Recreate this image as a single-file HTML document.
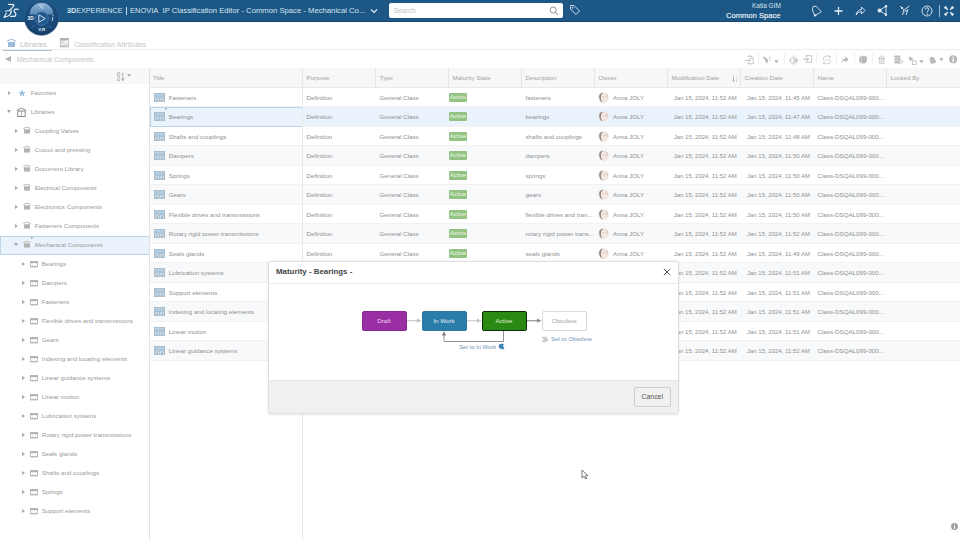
<!DOCTYPE html><html><head><meta charset="utf-8"><style>
*{margin:0;padding:0;box-sizing:border-box}
html,body{width:960px;height:540px;overflow:hidden;background:#fff;font-family:"Liberation Sans",sans-serif;position:relative}
.a{position:absolute}
.hdr{left:0;top:0;width:960px;height:21.5px;background:#1c5785;border-bottom:1px solid #17456c}
.ht{position:absolute;color:#d6e5f2;font-size:7.45px;white-space:nowrap;line-height:10px}
.t{position:absolute;white-space:nowrap;line-height:8px;font-size:6.2px;color:#909090}
.arr{position:absolute;width:0;height:0;border-left:3.9px solid #a9a9a9;border-top:2.9px solid transparent;border-bottom:2.9px solid transparent}
.arrd{position:absolute;width:0;height:0;border-top:3.8px solid #a0a0a0;border-left:2.8px solid transparent;border-right:2.8px solid transparent}
.vl{position:absolute;width:1px;background:#e6e6e6}
.hl{position:absolute;height:1px;background:#eeeeee}
.badge{position:absolute;width:18px;height:9.2px;background:#92c383;border-radius:1.2px;color:#eef9e8;font-size:6px;line-height:9.2px;text-align:center}
.ico{position:absolute;width:11px;height:9px;background:#a5c0d4;border:0.5px solid #8eabc1}
.av{position:absolute;width:10.5px;height:10.5px;border-radius:50%;background:radial-gradient(circle at 58% 50%,#f6ebe6 0,#efdfd8 45%,#c9b5ab 75%,#8f8580 100%)}
.lib{position:absolute;width:8px;height:7px}
</style></head><body>
<div class="a hdr"></div>
<div class="ht" style="left:67px;top:6.4px;font-size:7.2px"><b>3D</b>EXPERIENCE</div>
<div class="a" style="left:126.3px;top:7px;width:0.8px;height:8px;background:#c9dbeb"></div>
<div class="ht" style="left:130px;top:6.4px;font-size:7.5px">ENOVIA</div>
<div class="ht" style="left:162.5px;top:6.4px;font-size:7.7px">IP Classification Editor - Common Space - Mechanical Co...</div>
<div class="a" style="left:388.8px;top:3.3px;width:174.6px;height:14.7px;background:#fff;border-radius:2px"></div>
<div class="t" style="left:393.7px;top:7px;font-size:6.9px;color:#c2c2c2">Search</div>
<div class="ht" style="left:752px;top:1px;font-size:6.5px">Katia GIM</div>
<div class="ht" style="left:726px;top:10.5px;font-size:7.6px;color:#f4f8fb;-webkit-text-stroke:0.12px #f4f8fb">Common Space</div>
<div class="hl" style="left:0;top:49px;width:960px;background:#ececec"></div>
<div class="a" style="left:2.5px;top:49.5px;width:49px;height:1.5px;background:#a9c0d3"></div>
<div class="t" style="left:20px;top:40.5px;font-size:7px;color:#bdbdbd">Libraries</div>
<div class="t" style="left:74px;top:40.5px;font-size:7px;color:#c6c6c6">Classification Attributes</div>
<div class="t" style="left:16.7px;top:55.5px;font-size:7px;color:#c6c6c6">Mechanical Components</div>
<div class="a" style="left:4.5px;top:55.5px;width:0;height:0;border-right:6px solid #b5b5b5;border-top:3.9px solid transparent;border-bottom:3.9px solid transparent"></div>
<div class="a" style="left:0;top:68px;width:149px;height:16px;background:#f8f8f8"></div>
<div class="arr" style="left:8px;top:90.6px"></div>
<div class="t" style="left:30.8px;top:89.4px;color:#999">Favorites</div>
<svg class="a" style="left:17.5px;top:89px" width="8" height="8" viewBox="0 0 8 8"><path d="M4 0.3 L5 3 L7.8 3 L5.6 4.8 L6.4 7.6 L4 6 L1.6 7.6 L2.4 4.8 L0.2 3 L3 3 Z" fill="#9cc0de"/></svg>
<div class="arrd" style="left:7px;top:110.2px"></div>
<div class="t" style="left:30.8px;top:108.4px;color:#999">Libraries</div>
<svg class="a" style="left:16px;top:106.5px" width="11" height="11" viewBox="0 0 11 11"><path d="M0.8 3.5 L5.5 1 L10.2 3.5" fill="none" stroke="#8a8a8a" stroke-width="1"/><rect x="1.8" y="4" width="7.4" height="5.5" fill="none" stroke="#8a8a8a" stroke-width="1"/><path d="M5.5 4 V9.5" stroke="#8a8a8a" stroke-width="0.7"/></svg>
<div class="arr" style="left:15px;top:128.6px"></div>
<div class="t" style="left:34.7px;top:127.4px;color:#999">Coupling Valves</div>
<svg class="a" style="left:23px;top:126px" width="8" height="9" viewBox="0 0 8 9"><path d="M0.3 2.5 Q4 -0.2 7.7 2.5" fill="none" stroke="#b3b3b3" stroke-width="0.9"/><rect x="1" y="3.3" width="6" height="4.2" fill="#b3b3b3"/><rect x="3.5" y="7.5" width="1" height="0.8" fill="#ccc"/></svg>
<div class="arr" style="left:15px;top:147.6px"></div>
<div class="t" style="left:34.7px;top:146.4px;color:#999">Cutout and pressing</div>
<svg class="a" style="left:23px;top:145px" width="8" height="9" viewBox="0 0 8 9"><path d="M0.3 2.5 Q4 -0.2 7.7 2.5" fill="none" stroke="#b3b3b3" stroke-width="0.9"/><rect x="1" y="3.3" width="6" height="4.2" fill="#b3b3b3"/><rect x="3.5" y="7.5" width="1" height="0.8" fill="#ccc"/></svg>
<div class="arr" style="left:15px;top:166.6px"></div>
<div class="t" style="left:34.7px;top:165.4px;color:#999">Document Library</div>
<svg class="a" style="left:23px;top:164px" width="8" height="9" viewBox="0 0 8 9"><path d="M0.3 2.5 Q4 -0.2 7.7 2.5" fill="none" stroke="#b3b3b3" stroke-width="0.9"/><rect x="1" y="3.3" width="6" height="4.2" fill="#b3b3b3"/><rect x="3.5" y="7.5" width="1" height="0.8" fill="#ccc"/></svg>
<div class="arr" style="left:15px;top:185.6px"></div>
<div class="t" style="left:34.7px;top:184.4px;color:#999">Electrical Components</div>
<svg class="a" style="left:23px;top:183px" width="8" height="9" viewBox="0 0 8 9"><path d="M0.3 2.5 Q4 -0.2 7.7 2.5" fill="none" stroke="#b3b3b3" stroke-width="0.9"/><rect x="1" y="3.3" width="6" height="4.2" fill="#b3b3b3"/><rect x="3.5" y="7.5" width="1" height="0.8" fill="#ccc"/></svg>
<div class="arr" style="left:15px;top:204.6px"></div>
<div class="t" style="left:34.7px;top:203.4px;color:#999">Electronics Components</div>
<svg class="a" style="left:23px;top:202px" width="8" height="9" viewBox="0 0 8 9"><path d="M0.3 2.5 Q4 -0.2 7.7 2.5" fill="none" stroke="#b3b3b3" stroke-width="0.9"/><rect x="1" y="3.3" width="6" height="4.2" fill="#b3b3b3"/><rect x="3.5" y="7.5" width="1" height="0.8" fill="#ccc"/></svg>
<div class="arr" style="left:15px;top:223.6px"></div>
<div class="t" style="left:34.7px;top:222.4px;color:#999">Fasteners Components</div>
<svg class="a" style="left:23px;top:221px" width="8" height="9" viewBox="0 0 8 9"><path d="M0.3 2.5 Q4 -0.2 7.7 2.5" fill="none" stroke="#b3b3b3" stroke-width="0.9"/><rect x="1" y="3.3" width="6" height="4.2" fill="#b3b3b3"/><rect x="3.5" y="7.5" width="1" height="0.8" fill="#ccc"/></svg>
<div class="a" style="left:0;top:236px;width:150px;height:19px;background:#eaf3fb;border:1px solid #bcd4e8"></div>
<svg class="a" style="left:30.5px;top:236.5px" width="3" height="3" viewBox="0 0 3 3"><path d="M0 0 H2.4 L0 2.4 Z" fill="#93b4d2"/></svg>
<div class="arrd" style="left:14px;top:243.2px"></div>
<div class="t" style="left:34.7px;top:241.4px;color:#999">Mechanical Components</div>
<svg class="a" style="left:23px;top:240px" width="8" height="9" viewBox="0 0 8 9"><path d="M0.3 2.5 Q4 -0.2 7.7 2.5" fill="none" stroke="#b3b3b3" stroke-width="0.9"/><rect x="1" y="3.3" width="6" height="4.2" fill="#b3b3b3"/><rect x="3.5" y="7.5" width="1" height="0.8" fill="#ccc"/></svg>
<div class="arr" style="left:22px;top:261.6px"></div>
<div class="t" style="left:41.7px;top:260.4px;color:#999">Bearings</div>
<svg class="a" style="left:30px;top:260.5px" width="8" height="7" viewBox="0 0 8 7"><rect x="0.4" y="0.4" width="7.2" height="5.4" fill="none" stroke="#b0b0b0" stroke-width="0.8"/><rect x="0.4" y="0.4" width="7.2" height="1.8" fill="#b0b0b0"/><path d="M1 5.8 H7 M2.5 4.5 V6 M5.5 4.5 V6" stroke="#b0b0b0" stroke-width="0.8"/></svg>
<div class="arr" style="left:22px;top:280.6px"></div>
<div class="t" style="left:41.7px;top:279.4px;color:#999">Dampers</div>
<svg class="a" style="left:30px;top:279.5px" width="8" height="7" viewBox="0 0 8 7"><rect x="0.4" y="0.4" width="7.2" height="5.4" fill="none" stroke="#b0b0b0" stroke-width="0.8"/><rect x="0.4" y="0.4" width="7.2" height="1.8" fill="#b0b0b0"/><path d="M1 5.8 H7 M2.5 4.5 V6 M5.5 4.5 V6" stroke="#b0b0b0" stroke-width="0.8"/></svg>
<div class="arr" style="left:22px;top:299.6px"></div>
<div class="t" style="left:41.7px;top:298.4px;color:#999">Fasteners</div>
<svg class="a" style="left:30px;top:298.5px" width="8" height="7" viewBox="0 0 8 7"><rect x="0.4" y="0.4" width="7.2" height="5.4" fill="none" stroke="#b0b0b0" stroke-width="0.8"/><rect x="0.4" y="0.4" width="7.2" height="1.8" fill="#b0b0b0"/><path d="M1 5.8 H7 M2.5 4.5 V6 M5.5 4.5 V6" stroke="#b0b0b0" stroke-width="0.8"/></svg>
<div class="arr" style="left:22px;top:318.6px"></div>
<div class="t" style="left:41.7px;top:317.4px;color:#999">Flexible drives and transmissions</div>
<svg class="a" style="left:30px;top:317.5px" width="8" height="7" viewBox="0 0 8 7"><rect x="0.4" y="0.4" width="7.2" height="5.4" fill="none" stroke="#b0b0b0" stroke-width="0.8"/><rect x="0.4" y="0.4" width="7.2" height="1.8" fill="#b0b0b0"/><path d="M1 5.8 H7 M2.5 4.5 V6 M5.5 4.5 V6" stroke="#b0b0b0" stroke-width="0.8"/></svg>
<div class="arr" style="left:22px;top:337.6px"></div>
<div class="t" style="left:41.7px;top:336.4px;color:#999">Gears</div>
<svg class="a" style="left:30px;top:336.5px" width="8" height="7" viewBox="0 0 8 7"><rect x="0.4" y="0.4" width="7.2" height="5.4" fill="none" stroke="#b0b0b0" stroke-width="0.8"/><rect x="0.4" y="0.4" width="7.2" height="1.8" fill="#b0b0b0"/><path d="M1 5.8 H7 M2.5 4.5 V6 M5.5 4.5 V6" stroke="#b0b0b0" stroke-width="0.8"/></svg>
<div class="arr" style="left:22px;top:356.6px"></div>
<div class="t" style="left:41.7px;top:355.4px;color:#999">Indexing and locating elements</div>
<svg class="a" style="left:30px;top:355.5px" width="8" height="7" viewBox="0 0 8 7"><rect x="0.4" y="0.4" width="7.2" height="5.4" fill="none" stroke="#b0b0b0" stroke-width="0.8"/><rect x="0.4" y="0.4" width="7.2" height="1.8" fill="#b0b0b0"/><path d="M1 5.8 H7 M2.5 4.5 V6 M5.5 4.5 V6" stroke="#b0b0b0" stroke-width="0.8"/></svg>
<div class="arr" style="left:22px;top:375.6px"></div>
<div class="t" style="left:41.7px;top:374.4px;color:#999">Linear guidance systems</div>
<svg class="a" style="left:30px;top:374.5px" width="8" height="7" viewBox="0 0 8 7"><rect x="0.4" y="0.4" width="7.2" height="5.4" fill="none" stroke="#b0b0b0" stroke-width="0.8"/><rect x="0.4" y="0.4" width="7.2" height="1.8" fill="#b0b0b0"/><path d="M1 5.8 H7 M2.5 4.5 V6 M5.5 4.5 V6" stroke="#b0b0b0" stroke-width="0.8"/></svg>
<div class="arr" style="left:22px;top:394.6px"></div>
<div class="t" style="left:41.7px;top:393.4px;color:#999">Linear motion</div>
<svg class="a" style="left:30px;top:393.5px" width="8" height="7" viewBox="0 0 8 7"><rect x="0.4" y="0.4" width="7.2" height="5.4" fill="none" stroke="#b0b0b0" stroke-width="0.8"/><rect x="0.4" y="0.4" width="7.2" height="1.8" fill="#b0b0b0"/><path d="M1 5.8 H7 M2.5 4.5 V6 M5.5 4.5 V6" stroke="#b0b0b0" stroke-width="0.8"/></svg>
<div class="arr" style="left:22px;top:413.6px"></div>
<div class="t" style="left:41.7px;top:412.4px;color:#999">Lubrication systems</div>
<svg class="a" style="left:30px;top:412.5px" width="8" height="7" viewBox="0 0 8 7"><rect x="0.4" y="0.4" width="7.2" height="5.4" fill="none" stroke="#b0b0b0" stroke-width="0.8"/><rect x="0.4" y="0.4" width="7.2" height="1.8" fill="#b0b0b0"/><path d="M1 5.8 H7 M2.5 4.5 V6 M5.5 4.5 V6" stroke="#b0b0b0" stroke-width="0.8"/></svg>
<div class="arr" style="left:22px;top:432.6px"></div>
<div class="t" style="left:41.7px;top:431.4px;color:#999">Rotary rigid power transmissions</div>
<svg class="a" style="left:30px;top:431.5px" width="8" height="7" viewBox="0 0 8 7"><rect x="0.4" y="0.4" width="7.2" height="5.4" fill="none" stroke="#b0b0b0" stroke-width="0.8"/><rect x="0.4" y="0.4" width="7.2" height="1.8" fill="#b0b0b0"/><path d="M1 5.8 H7 M2.5 4.5 V6 M5.5 4.5 V6" stroke="#b0b0b0" stroke-width="0.8"/></svg>
<div class="arr" style="left:22px;top:451.6px"></div>
<div class="t" style="left:41.7px;top:450.4px;color:#999">Seals glands</div>
<svg class="a" style="left:30px;top:450.5px" width="8" height="7" viewBox="0 0 8 7"><rect x="0.4" y="0.4" width="7.2" height="5.4" fill="none" stroke="#b0b0b0" stroke-width="0.8"/><rect x="0.4" y="0.4" width="7.2" height="1.8" fill="#b0b0b0"/><path d="M1 5.8 H7 M2.5 4.5 V6 M5.5 4.5 V6" stroke="#b0b0b0" stroke-width="0.8"/></svg>
<div class="arr" style="left:22px;top:470.6px"></div>
<div class="t" style="left:41.7px;top:469.4px;color:#999">Shafts and couplings</div>
<svg class="a" style="left:30px;top:469.5px" width="8" height="7" viewBox="0 0 8 7"><rect x="0.4" y="0.4" width="7.2" height="5.4" fill="none" stroke="#b0b0b0" stroke-width="0.8"/><rect x="0.4" y="0.4" width="7.2" height="1.8" fill="#b0b0b0"/><path d="M1 5.8 H7 M2.5 4.5 V6 M5.5 4.5 V6" stroke="#b0b0b0" stroke-width="0.8"/></svg>
<div class="arr" style="left:22px;top:489.6px"></div>
<div class="t" style="left:41.7px;top:488.4px;color:#999">Springs</div>
<svg class="a" style="left:30px;top:488.5px" width="8" height="7" viewBox="0 0 8 7"><rect x="0.4" y="0.4" width="7.2" height="5.4" fill="none" stroke="#b0b0b0" stroke-width="0.8"/><rect x="0.4" y="0.4" width="7.2" height="1.8" fill="#b0b0b0"/><path d="M1 5.8 H7 M2.5 4.5 V6 M5.5 4.5 V6" stroke="#b0b0b0" stroke-width="0.8"/></svg>
<div class="arr" style="left:22px;top:508.6px"></div>
<div class="t" style="left:41.7px;top:507.4px;color:#999">Support elements</div>
<svg class="a" style="left:30px;top:507.5px" width="8" height="7" viewBox="0 0 8 7"><rect x="0.4" y="0.4" width="7.2" height="5.4" fill="none" stroke="#b0b0b0" stroke-width="0.8"/><rect x="0.4" y="0.4" width="7.2" height="1.8" fill="#b0b0b0"/><path d="M1 5.8 H7 M2.5 4.5 V6 M5.5 4.5 V6" stroke="#b0b0b0" stroke-width="0.8"/></svg>
<div class="vl" style="left:149px;top:68px;height:472px;background:#e3e3e3"></div>
<div class="a" style="left:150px;top:68px;width:810px;height:19.5px;background:#f7f7f7;border-bottom:1px solid #e9e9e9"></div>
<div class="t" style="left:153px;top:74px;color:#a3a3a3">Title</div>
<div class="vl" style="left:302.0px;top:68px;height:19.5px;background:#e6e6e6"></div>
<div class="t" style="left:306.5px;top:74px;color:#a3a3a3">Purpose</div>
<div class="vl" style="left:375.0px;top:68px;height:19.5px;background:#e6e6e6"></div>
<div class="t" style="left:379.5px;top:74px;color:#a3a3a3">Type</div>
<div class="vl" style="left:448.0px;top:68px;height:19.5px;background:#e6e6e6"></div>
<div class="t" style="left:452.5px;top:74px;color:#a3a3a3">Maturity State</div>
<div class="vl" style="left:521.0px;top:68px;height:19.5px;background:#e6e6e6"></div>
<div class="t" style="left:525.5px;top:74px;color:#a3a3a3">Description</div>
<div class="vl" style="left:594.0px;top:68px;height:19.5px;background:#e6e6e6"></div>
<div class="t" style="left:598.5px;top:74px;color:#a3a3a3">Owner</div>
<div class="vl" style="left:667.0px;top:68px;height:19.5px;background:#e6e6e6"></div>
<div class="t" style="left:671.5px;top:74px;color:#a3a3a3">Modification Date</div>
<div class="vl" style="left:740.0px;top:68px;height:19.5px;background:#e6e6e6"></div>
<div class="t" style="left:744.5px;top:74px;color:#a3a3a3">Creation Date</div>
<div class="vl" style="left:813.0px;top:68px;height:19.5px;background:#e6e6e6"></div>
<div class="t" style="left:817.5px;top:74px;color:#a3a3a3">Name</div>
<div class="vl" style="left:886.0px;top:68px;height:19.5px;background:#e6e6e6"></div>
<div class="t" style="left:890.5px;top:74px;color:#a3a3a3">Locked By</div>
<div class="a" style="left:150px;top:87.5px;width:810px;height:19.5px;background:#ffffff;border-bottom:1px solid #f2f2f2"></div>
<svg class="a" style="left:154px;top:92.75px" width="11" height="9" viewBox="0 0 11 9"><defs><linearGradient id="ig0" x1="0" y1="0" x2="0" y2="1"><stop offset="0" stop-color="#b9d3e6"/><stop offset="1" stop-color="#9fb5c6"/></linearGradient></defs><rect x="0.3" y="0.3" width="10.4" height="8.4" fill="url(#ig0)" stroke="#95abbc" stroke-width="0.6"/><path d="M1.6 8.6 V5.8 H4.6 V8.6 M6.4 8.6 V5.8 H9.4 V8.6" fill="none" stroke="#dfe9f0" stroke-width="0.8"/></svg>
<div class="t" style="left:168.8px;top:93.55px">Fasteners</div>
<div class="t" style="left:306.5px;top:93.55px">Definition</div>
<div class="t" style="left:379.5px;top:93.55px">General Class</div>
<div class="badge" style="left:449px;top:92.65px">Active</div>
<div class="t" style="left:525.5px;top:93.55px">fasteners</div>
<svg class="a" style="left:598px;top:91.85px" width="11" height="11" viewBox="0 0 11 11"><circle cx="5.5" cy="5.5" r="5.2" fill="#efe6e2"/><path d="M1.2 4 Q1.5 1 5 0.8 Q2.8 2.5 3 6 Q3 9 5 10.5 Q1 9.5 1.2 4 Z" fill="#8e8682"/><ellipse cx="6" cy="5.6" rx="3.1" ry="3.9" fill="#f5e6de"/><path d="M4.6 4.6 H5.4 M6.8 4.6 H7.6" stroke="#b09a90" stroke-width="0.6"/><path d="M8.5 2 Q9.8 3.5 9.3 6" stroke="#c8b8b0" stroke-width="0.7" fill="none"/></svg>
<div class="t" style="left:613px;top:93.55px">Anna JOLY</div>
<div class="t" style="left:673.75px;top:93.75px;font-size:6px">Jan 15, 2024, 11:52 AM</div>
<div class="t" style="left:747px;top:93.75px;font-size:6px">Jan 15, 2024, 11:45 AM</div>
<div class="t" style="left:817.5px;top:93.55px">Class-DSQAL099-000...</div>
<div class="a" style="left:150px;top:107.0px;width:810px;height:19.5px;background:#eaf3fb;border-bottom:1px solid #f2f2f2"></div>
<svg class="a" style="left:164.5px;top:107.5px" width="3" height="3" viewBox="0 0 3 3"><path d="M0 0 H2.4 L0 2.4 Z" fill="#93b4d2"/></svg>
<div class="a" style="left:149.5px;top:106.5px;width:153px;height:20px;border:1px solid #bcd4e8"></div>
<svg class="a" style="left:154px;top:112.25px" width="11" height="9" viewBox="0 0 11 9"><defs><linearGradient id="ig1" x1="0" y1="0" x2="0" y2="1"><stop offset="0" stop-color="#b9d3e6"/><stop offset="1" stop-color="#9fb5c6"/></linearGradient></defs><rect x="0.3" y="0.3" width="10.4" height="8.4" fill="url(#ig1)" stroke="#95abbc" stroke-width="0.6"/><path d="M1.6 8.6 V5.8 H4.6 V8.6 M6.4 8.6 V5.8 H9.4 V8.6" fill="none" stroke="#dfe9f0" stroke-width="0.8"/></svg>
<div class="t" style="left:168.8px;top:113.05px">Bearings</div>
<div class="t" style="left:306.5px;top:113.05px">Definition</div>
<div class="t" style="left:379.5px;top:113.05px">General Class</div>
<div class="badge" style="left:449px;top:112.15px">Active</div>
<div class="t" style="left:525.5px;top:113.05px">bearings</div>
<svg class="a" style="left:598px;top:111.35px" width="11" height="11" viewBox="0 0 11 11"><circle cx="5.5" cy="5.5" r="5.2" fill="#efe6e2"/><path d="M1.2 4 Q1.5 1 5 0.8 Q2.8 2.5 3 6 Q3 9 5 10.5 Q1 9.5 1.2 4 Z" fill="#8e8682"/><ellipse cx="6" cy="5.6" rx="3.1" ry="3.9" fill="#f5e6de"/><path d="M4.6 4.6 H5.4 M6.8 4.6 H7.6" stroke="#b09a90" stroke-width="0.6"/><path d="M8.5 2 Q9.8 3.5 9.3 6" stroke="#c8b8b0" stroke-width="0.7" fill="none"/></svg>
<div class="t" style="left:613px;top:113.05px">Anna JOLY</div>
<div class="t" style="left:673.75px;top:113.25px;font-size:6px">Jan 15, 2024, 11:52 AM</div>
<div class="t" style="left:747px;top:113.25px;font-size:6px">Jan 15, 2024, 11:47 AM</div>
<div class="t" style="left:817.5px;top:113.05px">Class-DSQAL099-000...</div>
<div class="a" style="left:150px;top:126.5px;width:810px;height:19.5px;background:#ffffff;border-bottom:1px solid #f2f2f2"></div>
<svg class="a" style="left:154px;top:131.75px" width="11" height="9" viewBox="0 0 11 9"><defs><linearGradient id="ig2" x1="0" y1="0" x2="0" y2="1"><stop offset="0" stop-color="#b9d3e6"/><stop offset="1" stop-color="#9fb5c6"/></linearGradient></defs><rect x="0.3" y="0.3" width="10.4" height="8.4" fill="url(#ig2)" stroke="#95abbc" stroke-width="0.6"/><path d="M1.6 8.6 V5.8 H4.6 V8.6 M6.4 8.6 V5.8 H9.4 V8.6" fill="none" stroke="#dfe9f0" stroke-width="0.8"/></svg>
<div class="t" style="left:168.8px;top:132.55px">Shafts and couplings</div>
<div class="t" style="left:306.5px;top:132.55px">Definition</div>
<div class="t" style="left:379.5px;top:132.55px">General Class</div>
<div class="badge" style="left:449px;top:131.65px">Active</div>
<div class="t" style="left:525.5px;top:132.55px">shafts and couplings</div>
<svg class="a" style="left:598px;top:130.85px" width="11" height="11" viewBox="0 0 11 11"><circle cx="5.5" cy="5.5" r="5.2" fill="#efe6e2"/><path d="M1.2 4 Q1.5 1 5 0.8 Q2.8 2.5 3 6 Q3 9 5 10.5 Q1 9.5 1.2 4 Z" fill="#8e8682"/><ellipse cx="6" cy="5.6" rx="3.1" ry="3.9" fill="#f5e6de"/><path d="M4.6 4.6 H5.4 M6.8 4.6 H7.6" stroke="#b09a90" stroke-width="0.6"/><path d="M8.5 2 Q9.8 3.5 9.3 6" stroke="#c8b8b0" stroke-width="0.7" fill="none"/></svg>
<div class="t" style="left:613px;top:132.55px">Anna JOLY</div>
<div class="t" style="left:673.75px;top:132.75px;font-size:6px">Jan 15, 2024, 11:52 AM</div>
<div class="t" style="left:747px;top:132.75px;font-size:6px">Jan 15, 2024, 11:48 AM</div>
<div class="t" style="left:817.5px;top:132.55px">Class-DSQAL099-000...</div>
<div class="a" style="left:150px;top:146.0px;width:810px;height:19.5px;background:#f8f9fa;border-bottom:1px solid #f2f2f2"></div>
<svg class="a" style="left:154px;top:151.25px" width="11" height="9" viewBox="0 0 11 9"><defs><linearGradient id="ig3" x1="0" y1="0" x2="0" y2="1"><stop offset="0" stop-color="#b9d3e6"/><stop offset="1" stop-color="#9fb5c6"/></linearGradient></defs><rect x="0.3" y="0.3" width="10.4" height="8.4" fill="url(#ig3)" stroke="#95abbc" stroke-width="0.6"/><path d="M1.6 8.6 V5.8 H4.6 V8.6 M6.4 8.6 V5.8 H9.4 V8.6" fill="none" stroke="#dfe9f0" stroke-width="0.8"/></svg>
<div class="t" style="left:168.8px;top:152.05px">Dampers</div>
<div class="t" style="left:306.5px;top:152.05px">Definition</div>
<div class="t" style="left:379.5px;top:152.05px">General Class</div>
<div class="badge" style="left:449px;top:151.15px">Active</div>
<div class="t" style="left:525.5px;top:152.05px">dampers</div>
<svg class="a" style="left:598px;top:150.35px" width="11" height="11" viewBox="0 0 11 11"><circle cx="5.5" cy="5.5" r="5.2" fill="#efe6e2"/><path d="M1.2 4 Q1.5 1 5 0.8 Q2.8 2.5 3 6 Q3 9 5 10.5 Q1 9.5 1.2 4 Z" fill="#8e8682"/><ellipse cx="6" cy="5.6" rx="3.1" ry="3.9" fill="#f5e6de"/><path d="M4.6 4.6 H5.4 M6.8 4.6 H7.6" stroke="#b09a90" stroke-width="0.6"/><path d="M8.5 2 Q9.8 3.5 9.3 6" stroke="#c8b8b0" stroke-width="0.7" fill="none"/></svg>
<div class="t" style="left:613px;top:152.05px">Anna JOLY</div>
<div class="t" style="left:673.75px;top:152.25px;font-size:6px">Jan 15, 2024, 11:52 AM</div>
<div class="t" style="left:747px;top:152.25px;font-size:6px">Jan 15, 2024, 11:50 AM</div>
<div class="t" style="left:817.5px;top:152.05px">Class-DSQAL099-000...</div>
<div class="a" style="left:150px;top:165.5px;width:810px;height:19.5px;background:#ffffff;border-bottom:1px solid #f2f2f2"></div>
<svg class="a" style="left:154px;top:170.75px" width="11" height="9" viewBox="0 0 11 9"><defs><linearGradient id="ig4" x1="0" y1="0" x2="0" y2="1"><stop offset="0" stop-color="#b9d3e6"/><stop offset="1" stop-color="#9fb5c6"/></linearGradient></defs><rect x="0.3" y="0.3" width="10.4" height="8.4" fill="url(#ig4)" stroke="#95abbc" stroke-width="0.6"/><path d="M1.6 8.6 V5.8 H4.6 V8.6 M6.4 8.6 V5.8 H9.4 V8.6" fill="none" stroke="#dfe9f0" stroke-width="0.8"/></svg>
<div class="t" style="left:168.8px;top:171.55px">Springs</div>
<div class="t" style="left:306.5px;top:171.55px">Definition</div>
<div class="t" style="left:379.5px;top:171.55px">General Class</div>
<div class="badge" style="left:449px;top:170.65px">Active</div>
<div class="t" style="left:525.5px;top:171.55px">springs</div>
<svg class="a" style="left:598px;top:169.85px" width="11" height="11" viewBox="0 0 11 11"><circle cx="5.5" cy="5.5" r="5.2" fill="#efe6e2"/><path d="M1.2 4 Q1.5 1 5 0.8 Q2.8 2.5 3 6 Q3 9 5 10.5 Q1 9.5 1.2 4 Z" fill="#8e8682"/><ellipse cx="6" cy="5.6" rx="3.1" ry="3.9" fill="#f5e6de"/><path d="M4.6 4.6 H5.4 M6.8 4.6 H7.6" stroke="#b09a90" stroke-width="0.6"/><path d="M8.5 2 Q9.8 3.5 9.3 6" stroke="#c8b8b0" stroke-width="0.7" fill="none"/></svg>
<div class="t" style="left:613px;top:171.55px">Anna JOLY</div>
<div class="t" style="left:673.75px;top:171.75px;font-size:6px">Jan 15, 2024, 11:52 AM</div>
<div class="t" style="left:747px;top:171.75px;font-size:6px">Jan 15, 2024, 11:50 AM</div>
<div class="t" style="left:817.5px;top:171.55px">Class-DSQAL099-000...</div>
<div class="a" style="left:150px;top:185.0px;width:810px;height:19.5px;background:#f8f9fa;border-bottom:1px solid #f2f2f2"></div>
<svg class="a" style="left:154px;top:190.25px" width="11" height="9" viewBox="0 0 11 9"><defs><linearGradient id="ig5" x1="0" y1="0" x2="0" y2="1"><stop offset="0" stop-color="#b9d3e6"/><stop offset="1" stop-color="#9fb5c6"/></linearGradient></defs><rect x="0.3" y="0.3" width="10.4" height="8.4" fill="url(#ig5)" stroke="#95abbc" stroke-width="0.6"/><path d="M1.6 8.6 V5.8 H4.6 V8.6 M6.4 8.6 V5.8 H9.4 V8.6" fill="none" stroke="#dfe9f0" stroke-width="0.8"/></svg>
<div class="t" style="left:168.8px;top:191.05px">Gears</div>
<div class="t" style="left:306.5px;top:191.05px">Definition</div>
<div class="t" style="left:379.5px;top:191.05px">General Class</div>
<div class="badge" style="left:449px;top:190.15px">Active</div>
<div class="t" style="left:525.5px;top:191.05px">gears</div>
<svg class="a" style="left:598px;top:189.35px" width="11" height="11" viewBox="0 0 11 11"><circle cx="5.5" cy="5.5" r="5.2" fill="#efe6e2"/><path d="M1.2 4 Q1.5 1 5 0.8 Q2.8 2.5 3 6 Q3 9 5 10.5 Q1 9.5 1.2 4 Z" fill="#8e8682"/><ellipse cx="6" cy="5.6" rx="3.1" ry="3.9" fill="#f5e6de"/><path d="M4.6 4.6 H5.4 M6.8 4.6 H7.6" stroke="#b09a90" stroke-width="0.6"/><path d="M8.5 2 Q9.8 3.5 9.3 6" stroke="#c8b8b0" stroke-width="0.7" fill="none"/></svg>
<div class="t" style="left:613px;top:191.05px">Anna JOLY</div>
<div class="t" style="left:673.75px;top:191.25px;font-size:6px">Jan 15, 2024, 11:52 AM</div>
<div class="t" style="left:747px;top:191.25px;font-size:6px">Jan 15, 2024, 11:50 AM</div>
<div class="t" style="left:817.5px;top:191.05px">Class-DSQAL099-000...</div>
<div class="a" style="left:150px;top:204.5px;width:810px;height:19.5px;background:#ffffff;border-bottom:1px solid #f2f2f2"></div>
<svg class="a" style="left:154px;top:209.75px" width="11" height="9" viewBox="0 0 11 9"><defs><linearGradient id="ig6" x1="0" y1="0" x2="0" y2="1"><stop offset="0" stop-color="#b9d3e6"/><stop offset="1" stop-color="#9fb5c6"/></linearGradient></defs><rect x="0.3" y="0.3" width="10.4" height="8.4" fill="url(#ig6)" stroke="#95abbc" stroke-width="0.6"/><path d="M1.6 8.6 V5.8 H4.6 V8.6 M6.4 8.6 V5.8 H9.4 V8.6" fill="none" stroke="#dfe9f0" stroke-width="0.8"/></svg>
<div class="t" style="left:168.8px;top:210.55px">Flexible drives and transmissions</div>
<div class="t" style="left:306.5px;top:210.55px">Definition</div>
<div class="t" style="left:379.5px;top:210.55px">General Class</div>
<div class="badge" style="left:449px;top:209.65px">Active</div>
<div class="t" style="left:525.5px;top:210.55px">flexible drives and tran...</div>
<svg class="a" style="left:598px;top:208.85px" width="11" height="11" viewBox="0 0 11 11"><circle cx="5.5" cy="5.5" r="5.2" fill="#efe6e2"/><path d="M1.2 4 Q1.5 1 5 0.8 Q2.8 2.5 3 6 Q3 9 5 10.5 Q1 9.5 1.2 4 Z" fill="#8e8682"/><ellipse cx="6" cy="5.6" rx="3.1" ry="3.9" fill="#f5e6de"/><path d="M4.6 4.6 H5.4 M6.8 4.6 H7.6" stroke="#b09a90" stroke-width="0.6"/><path d="M8.5 2 Q9.8 3.5 9.3 6" stroke="#c8b8b0" stroke-width="0.7" fill="none"/></svg>
<div class="t" style="left:613px;top:210.55px">Anna JOLY</div>
<div class="t" style="left:673.75px;top:210.75px;font-size:6px">Jan 15, 2024, 11:52 AM</div>
<div class="t" style="left:747px;top:210.75px;font-size:6px">Jan 15, 2024, 11:50 AM</div>
<div class="t" style="left:817.5px;top:210.55px">Class-DSQAL099-000...</div>
<div class="a" style="left:150px;top:224.0px;width:810px;height:19.5px;background:#f8f9fa;border-bottom:1px solid #f2f2f2"></div>
<svg class="a" style="left:154px;top:229.25px" width="11" height="9" viewBox="0 0 11 9"><defs><linearGradient id="ig7" x1="0" y1="0" x2="0" y2="1"><stop offset="0" stop-color="#b9d3e6"/><stop offset="1" stop-color="#9fb5c6"/></linearGradient></defs><rect x="0.3" y="0.3" width="10.4" height="8.4" fill="url(#ig7)" stroke="#95abbc" stroke-width="0.6"/><path d="M1.6 8.6 V5.8 H4.6 V8.6 M6.4 8.6 V5.8 H9.4 V8.6" fill="none" stroke="#dfe9f0" stroke-width="0.8"/></svg>
<div class="t" style="left:168.8px;top:230.05px">Rotary rigid power transmissions</div>
<div class="t" style="left:306.5px;top:230.05px">Definition</div>
<div class="t" style="left:379.5px;top:230.05px">General Class</div>
<div class="badge" style="left:449px;top:229.15px">Active</div>
<div class="t" style="left:525.5px;top:230.05px">rotary rigid power trans...</div>
<svg class="a" style="left:598px;top:228.35px" width="11" height="11" viewBox="0 0 11 11"><circle cx="5.5" cy="5.5" r="5.2" fill="#efe6e2"/><path d="M1.2 4 Q1.5 1 5 0.8 Q2.8 2.5 3 6 Q3 9 5 10.5 Q1 9.5 1.2 4 Z" fill="#8e8682"/><ellipse cx="6" cy="5.6" rx="3.1" ry="3.9" fill="#f5e6de"/><path d="M4.6 4.6 H5.4 M6.8 4.6 H7.6" stroke="#b09a90" stroke-width="0.6"/><path d="M8.5 2 Q9.8 3.5 9.3 6" stroke="#c8b8b0" stroke-width="0.7" fill="none"/></svg>
<div class="t" style="left:613px;top:230.05px">Anna JOLY</div>
<div class="t" style="left:673.75px;top:230.25px;font-size:6px">Jan 15, 2024, 11:52 AM</div>
<div class="t" style="left:747px;top:230.25px;font-size:6px">Jan 15, 2024, 11:52 AM</div>
<div class="t" style="left:817.5px;top:230.05px">Class-DSQAL099-000...</div>
<div class="a" style="left:150px;top:243.5px;width:810px;height:19.5px;background:#ffffff;border-bottom:1px solid #f2f2f2"></div>
<svg class="a" style="left:154px;top:248.75px" width="11" height="9" viewBox="0 0 11 9"><defs><linearGradient id="ig8" x1="0" y1="0" x2="0" y2="1"><stop offset="0" stop-color="#b9d3e6"/><stop offset="1" stop-color="#9fb5c6"/></linearGradient></defs><rect x="0.3" y="0.3" width="10.4" height="8.4" fill="url(#ig8)" stroke="#95abbc" stroke-width="0.6"/><path d="M1.6 8.6 V5.8 H4.6 V8.6 M6.4 8.6 V5.8 H9.4 V8.6" fill="none" stroke="#dfe9f0" stroke-width="0.8"/></svg>
<div class="t" style="left:168.8px;top:249.55px">Seals glands</div>
<div class="t" style="left:306.5px;top:249.55px">Definition</div>
<div class="t" style="left:379.5px;top:249.55px">General Class</div>
<div class="badge" style="left:449px;top:248.65px">Active</div>
<div class="t" style="left:525.5px;top:249.55px">seals glands</div>
<svg class="a" style="left:598px;top:247.85px" width="11" height="11" viewBox="0 0 11 11"><circle cx="5.5" cy="5.5" r="5.2" fill="#efe6e2"/><path d="M1.2 4 Q1.5 1 5 0.8 Q2.8 2.5 3 6 Q3 9 5 10.5 Q1 9.5 1.2 4 Z" fill="#8e8682"/><ellipse cx="6" cy="5.6" rx="3.1" ry="3.9" fill="#f5e6de"/><path d="M4.6 4.6 H5.4 M6.8 4.6 H7.6" stroke="#b09a90" stroke-width="0.6"/><path d="M8.5 2 Q9.8 3.5 9.3 6" stroke="#c8b8b0" stroke-width="0.7" fill="none"/></svg>
<div class="t" style="left:613px;top:249.55px">Anna JOLY</div>
<div class="t" style="left:673.75px;top:249.75px;font-size:6px">Jan 15, 2024, 11:52 AM</div>
<div class="t" style="left:747px;top:249.75px;font-size:6px">Jan 15, 2024, 11:49 AM</div>
<div class="t" style="left:817.5px;top:249.55px">Class-DSQAL099-000...</div>
<div class="a" style="left:150px;top:263.0px;width:810px;height:19.5px;background:#f8f9fa;border-bottom:1px solid #f2f2f2"></div>
<svg class="a" style="left:154px;top:268.25px" width="11" height="9" viewBox="0 0 11 9"><defs><linearGradient id="ig9" x1="0" y1="0" x2="0" y2="1"><stop offset="0" stop-color="#b9d3e6"/><stop offset="1" stop-color="#9fb5c6"/></linearGradient></defs><rect x="0.3" y="0.3" width="10.4" height="8.4" fill="url(#ig9)" stroke="#95abbc" stroke-width="0.6"/><path d="M1.6 8.6 V5.8 H4.6 V8.6 M6.4 8.6 V5.8 H9.4 V8.6" fill="none" stroke="#dfe9f0" stroke-width="0.8"/></svg>
<div class="t" style="left:168.8px;top:269.05px">Lubrication systems</div>
<div class="t" style="left:306.5px;top:269.05px">Definition</div>
<div class="t" style="left:379.5px;top:269.05px">General Class</div>
<div class="badge" style="left:449px;top:268.15px">Active</div>
<div class="t" style="left:525.5px;top:269.05px">lubrication systems</div>
<svg class="a" style="left:598px;top:267.35px" width="11" height="11" viewBox="0 0 11 11"><circle cx="5.5" cy="5.5" r="5.2" fill="#efe6e2"/><path d="M1.2 4 Q1.5 1 5 0.8 Q2.8 2.5 3 6 Q3 9 5 10.5 Q1 9.5 1.2 4 Z" fill="#8e8682"/><ellipse cx="6" cy="5.6" rx="3.1" ry="3.9" fill="#f5e6de"/><path d="M4.6 4.6 H5.4 M6.8 4.6 H7.6" stroke="#b09a90" stroke-width="0.6"/><path d="M8.5 2 Q9.8 3.5 9.3 6" stroke="#c8b8b0" stroke-width="0.7" fill="none"/></svg>
<div class="t" style="left:613px;top:269.05px">Anna JOLY</div>
<div class="t" style="left:673.75px;top:269.25px;font-size:6px">Jan 15, 2024, 11:52 AM</div>
<div class="t" style="left:747px;top:269.25px;font-size:6px">Jan 15, 2024, 11:51 AM</div>
<div class="t" style="left:817.5px;top:269.05px">Class-DSQAL099-000...</div>
<div class="a" style="left:150px;top:282.5px;width:810px;height:19.5px;background:#ffffff;border-bottom:1px solid #f2f2f2"></div>
<svg class="a" style="left:154px;top:287.75px" width="11" height="9" viewBox="0 0 11 9"><defs><linearGradient id="ig10" x1="0" y1="0" x2="0" y2="1"><stop offset="0" stop-color="#b9d3e6"/><stop offset="1" stop-color="#9fb5c6"/></linearGradient></defs><rect x="0.3" y="0.3" width="10.4" height="8.4" fill="url(#ig10)" stroke="#95abbc" stroke-width="0.6"/><path d="M1.6 8.6 V5.8 H4.6 V8.6 M6.4 8.6 V5.8 H9.4 V8.6" fill="none" stroke="#dfe9f0" stroke-width="0.8"/></svg>
<div class="t" style="left:168.8px;top:288.55px">Support elements</div>
<div class="t" style="left:306.5px;top:288.55px">Definition</div>
<div class="t" style="left:379.5px;top:288.55px">General Class</div>
<div class="badge" style="left:449px;top:287.65px">Active</div>
<div class="t" style="left:525.5px;top:288.55px">support elements</div>
<svg class="a" style="left:598px;top:286.85px" width="11" height="11" viewBox="0 0 11 11"><circle cx="5.5" cy="5.5" r="5.2" fill="#efe6e2"/><path d="M1.2 4 Q1.5 1 5 0.8 Q2.8 2.5 3 6 Q3 9 5 10.5 Q1 9.5 1.2 4 Z" fill="#8e8682"/><ellipse cx="6" cy="5.6" rx="3.1" ry="3.9" fill="#f5e6de"/><path d="M4.6 4.6 H5.4 M6.8 4.6 H7.6" stroke="#b09a90" stroke-width="0.6"/><path d="M8.5 2 Q9.8 3.5 9.3 6" stroke="#c8b8b0" stroke-width="0.7" fill="none"/></svg>
<div class="t" style="left:613px;top:288.55px">Anna JOLY</div>
<div class="t" style="left:673.75px;top:288.75px;font-size:6px">Jan 15, 2024, 11:52 AM</div>
<div class="t" style="left:747px;top:288.75px;font-size:6px">Jan 15, 2024, 11:51 AM</div>
<div class="t" style="left:817.5px;top:288.55px">Class-DSQAL099-000...</div>
<div class="a" style="left:150px;top:302.0px;width:810px;height:19.5px;background:#f8f9fa;border-bottom:1px solid #f2f2f2"></div>
<svg class="a" style="left:154px;top:307.25px" width="11" height="9" viewBox="0 0 11 9"><defs><linearGradient id="ig11" x1="0" y1="0" x2="0" y2="1"><stop offset="0" stop-color="#b9d3e6"/><stop offset="1" stop-color="#9fb5c6"/></linearGradient></defs><rect x="0.3" y="0.3" width="10.4" height="8.4" fill="url(#ig11)" stroke="#95abbc" stroke-width="0.6"/><path d="M1.6 8.6 V5.8 H4.6 V8.6 M6.4 8.6 V5.8 H9.4 V8.6" fill="none" stroke="#dfe9f0" stroke-width="0.8"/></svg>
<div class="t" style="left:168.8px;top:308.05px">Indexing and locating elements</div>
<div class="t" style="left:306.5px;top:308.05px">Definition</div>
<div class="t" style="left:379.5px;top:308.05px">General Class</div>
<div class="badge" style="left:449px;top:307.15px">Active</div>
<div class="t" style="left:525.5px;top:308.05px">indexing and locating...</div>
<svg class="a" style="left:598px;top:306.35px" width="11" height="11" viewBox="0 0 11 11"><circle cx="5.5" cy="5.5" r="5.2" fill="#efe6e2"/><path d="M1.2 4 Q1.5 1 5 0.8 Q2.8 2.5 3 6 Q3 9 5 10.5 Q1 9.5 1.2 4 Z" fill="#8e8682"/><ellipse cx="6" cy="5.6" rx="3.1" ry="3.9" fill="#f5e6de"/><path d="M4.6 4.6 H5.4 M6.8 4.6 H7.6" stroke="#b09a90" stroke-width="0.6"/><path d="M8.5 2 Q9.8 3.5 9.3 6" stroke="#c8b8b0" stroke-width="0.7" fill="none"/></svg>
<div class="t" style="left:613px;top:308.05px">Anna JOLY</div>
<div class="t" style="left:673.75px;top:308.25px;font-size:6px">Jan 15, 2024, 11:52 AM</div>
<div class="t" style="left:747px;top:308.25px;font-size:6px">Jan 15, 2024, 11:51 AM</div>
<div class="t" style="left:817.5px;top:308.05px">Class-DSQAL099-000...</div>
<div class="a" style="left:150px;top:321.5px;width:810px;height:19.5px;background:#ffffff;border-bottom:1px solid #f2f2f2"></div>
<svg class="a" style="left:154px;top:326.75px" width="11" height="9" viewBox="0 0 11 9"><defs><linearGradient id="ig12" x1="0" y1="0" x2="0" y2="1"><stop offset="0" stop-color="#b9d3e6"/><stop offset="1" stop-color="#9fb5c6"/></linearGradient></defs><rect x="0.3" y="0.3" width="10.4" height="8.4" fill="url(#ig12)" stroke="#95abbc" stroke-width="0.6"/><path d="M1.6 8.6 V5.8 H4.6 V8.6 M6.4 8.6 V5.8 H9.4 V8.6" fill="none" stroke="#dfe9f0" stroke-width="0.8"/></svg>
<div class="t" style="left:168.8px;top:327.55px">Linear motion</div>
<div class="t" style="left:306.5px;top:327.55px">Definition</div>
<div class="t" style="left:379.5px;top:327.55px">General Class</div>
<div class="badge" style="left:449px;top:326.65px">Active</div>
<div class="t" style="left:525.5px;top:327.55px">linear motion</div>
<svg class="a" style="left:598px;top:325.85px" width="11" height="11" viewBox="0 0 11 11"><circle cx="5.5" cy="5.5" r="5.2" fill="#efe6e2"/><path d="M1.2 4 Q1.5 1 5 0.8 Q2.8 2.5 3 6 Q3 9 5 10.5 Q1 9.5 1.2 4 Z" fill="#8e8682"/><ellipse cx="6" cy="5.6" rx="3.1" ry="3.9" fill="#f5e6de"/><path d="M4.6 4.6 H5.4 M6.8 4.6 H7.6" stroke="#b09a90" stroke-width="0.6"/><path d="M8.5 2 Q9.8 3.5 9.3 6" stroke="#c8b8b0" stroke-width="0.7" fill="none"/></svg>
<div class="t" style="left:613px;top:327.55px">Anna JOLY</div>
<div class="t" style="left:673.75px;top:327.75px;font-size:6px">Jan 15, 2024, 11:52 AM</div>
<div class="t" style="left:747px;top:327.75px;font-size:6px">Jan 15, 2024, 11:51 AM</div>
<div class="t" style="left:817.5px;top:327.55px">Class-DSQAL099-000...</div>
<div class="a" style="left:150px;top:341.0px;width:810px;height:19.5px;background:#f8f9fa;border-bottom:1px solid #f2f2f2"></div>
<svg class="a" style="left:154px;top:346.25px" width="11" height="9" viewBox="0 0 11 9"><defs><linearGradient id="ig13" x1="0" y1="0" x2="0" y2="1"><stop offset="0" stop-color="#b9d3e6"/><stop offset="1" stop-color="#9fb5c6"/></linearGradient></defs><rect x="0.3" y="0.3" width="10.4" height="8.4" fill="url(#ig13)" stroke="#95abbc" stroke-width="0.6"/><path d="M1.6 8.6 V5.8 H4.6 V8.6 M6.4 8.6 V5.8 H9.4 V8.6" fill="none" stroke="#dfe9f0" stroke-width="0.8"/></svg>
<div class="t" style="left:168.8px;top:347.05px">Linear guidance systems</div>
<div class="t" style="left:306.5px;top:347.05px">Definition</div>
<div class="t" style="left:379.5px;top:347.05px">General Class</div>
<div class="badge" style="left:449px;top:346.15px">Active</div>
<div class="t" style="left:525.5px;top:347.05px">linear guidance systems</div>
<svg class="a" style="left:598px;top:345.35px" width="11" height="11" viewBox="0 0 11 11"><circle cx="5.5" cy="5.5" r="5.2" fill="#efe6e2"/><path d="M1.2 4 Q1.5 1 5 0.8 Q2.8 2.5 3 6 Q3 9 5 10.5 Q1 9.5 1.2 4 Z" fill="#8e8682"/><ellipse cx="6" cy="5.6" rx="3.1" ry="3.9" fill="#f5e6de"/><path d="M4.6 4.6 H5.4 M6.8 4.6 H7.6" stroke="#b09a90" stroke-width="0.6"/><path d="M8.5 2 Q9.8 3.5 9.3 6" stroke="#c8b8b0" stroke-width="0.7" fill="none"/></svg>
<div class="t" style="left:613px;top:347.05px">Anna JOLY</div>
<div class="t" style="left:673.75px;top:347.25px;font-size:6px">Jan 15, 2024, 11:52 AM</div>
<div class="t" style="left:747px;top:347.25px;font-size:6px">Jan 15, 2024, 11:52 AM</div>
<div class="t" style="left:817.5px;top:347.05px">Class-DSQAL099-000...</div>
<div class="vl" style="left:302px;top:87px;height:453px;background:#e8e8e8"></div>
<svg class="a" style="left:731px;top:74.5px" width="8" height="8" viewBox="0 0 8 8"><path d="M2.5 0.5 V6.5" stroke="#b0b0b0" stroke-width="0.8"/><path d="M1.3 5.3 L2.5 7 L3.7 5.3 Z" fill="#b0b0b0"/><path d="M5.5 1 L6.3 2.3 L5.5 3 M5.5 4.5 V7" stroke="#c0c0c0" stroke-width="0.7" fill="none"/></svg>
<div class="a" style="left:268px;top:261.4px;width:410.8px;height:152.7px;background:#fff;border:1px solid #dedede;border-radius:3px;box-shadow:0 0.5px 3px rgba(0,0,0,0.09);overflow:hidden"><div class="a" style="left:0;top:20.9px;width:410px;height:1px;background:#ececec"></div><div class="a" style="left:0;top:117.4px;width:410px;height:35px;background:#f0f0f0;border-top:1px solid #e6e6e6"></div></div>
<div class="t" style="left:276px;top:267.4px;font-size:7.9px;font-weight:bold;color:#444;line-height:9px">Maturity - Bearings -</div>
<svg class="a" style="left:0px;top:0px" width="22" height="21" viewBox="0 0 22 21"><g fill="none" stroke="#e9f1f9" stroke-linecap="round" stroke-linejoin="round"><path d="M8.6 4.4 L13.6 4.7 Q14.4 5.6 12.6 7.4 L9.6 10.2" stroke-width="1.2"/><path d="M5.2 11.4 Q8 10.2 11.4 10.9" stroke-width="1.1" stroke="#b8d0e6"/><path d="M11.2 11.3 Q11.2 14.5 8 16 L4 17.4 L6.3 13.2" stroke-width="1.1"/><path d="M18.2 9.4 Q15 8.6 14 10.2 Q13.6 11.6 15.4 13 Q16.6 14.4 15.4 15.9 Q14 16.6 10.6 16.3" stroke-width="1.2"/></g></svg>
<svg class="a" style="left:23px;top:0px" width="38" height="37" viewBox="0 0 38 37"><defs><radialGradient id="cg" cx="50%" cy="40%" r="60%"><stop offset="0" stop-color="#22558a"/><stop offset="0.7" stop-color="#1b4a79"/><stop offset="1" stop-color="#143b63"/></radialGradient><linearGradient id="cap" x1="0" y1="0" x2="0" y2="1"><stop offset="0" stop-color="#8fb4d6"/><stop offset="1" stop-color="#5a89b6"/></linearGradient></defs><circle cx="18.5" cy="18.3" r="17" fill="url(#cg)" stroke="#2a5a89" stroke-width="0.6"/><path d="M6.7 14.5 A11.8 11.8 0 0 1 30.3 14.5 Z" fill="url(#cap)"/><circle cx="18.6" cy="18.5" r="6.8" fill="#21598e" stroke="#4a7cad" stroke-width="0.8"/><path d="M15.8 14.8 L22.3 18.5 L15.8 22.2 Z" fill="none" stroke="#e6eef6" stroke-width="0.9" stroke-linejoin="round"/><path d="M8.5 28 L11 25.5 M28.5 28 L26 25.5" stroke="#5a88b5" stroke-width="0.6"/><path d="M16.8 8.5 L20 4.5" stroke="#f0f5fa" stroke-width="0.7"/><circle cx="17" cy="5.2" r="0.7" fill="#f0f5fa"/><circle cx="19.8" cy="8" r="0.7" fill="#f0f5fa"/><text x="4.6" y="20.3" font-family="Liberation Sans" font-size="4.6" font-weight="bold" fill="#eef4fa">3D</text><text x="15.3" y="30.6" font-family="Liberation Sans" font-size="4.3" font-weight="bold" fill="#eef4fa">V,R</text><path d="M29.8 16.8 L29.3 21" stroke="#eef4fa" stroke-width="0.8"/><circle cx="30" cy="15.6" r="0.5" fill="#eef4fa"/></svg>
<svg class="a" style="left:369.5px;top:8px" width="8" height="6" viewBox="0 0 8 6"><path d="M1 1.5 L4 4.5 L7 1.5" fill="none" stroke="#e6eff7" stroke-width="1.2"/></svg>
<svg class="a" style="left:549px;top:5.5px" width="10" height="10" viewBox="0 0 10 10"><circle cx="4.2" cy="4" r="3" fill="none" stroke="#6a6a6a" stroke-width="0.7"/><path d="M6.4 6.2 L8.8 8.8" stroke="#6a6a6a" stroke-width="0.9"/></svg>
<svg class="a" style="left:569px;top:4px" width="12" height="12" viewBox="0 0 12 12"><path d="M1.5 2.5 L1.5 1.5 L5 1.5 L10.5 7 L7 10.5 L1.5 5 Z" fill="none" stroke="#e6eff7" stroke-width="0.9"/><circle cx="3.7" cy="3.7" r="0.8" fill="#e6eff7"/></svg>
<svg class="a" style="left:810px;top:4px" width="13" height="13" viewBox="0 0 13 13"><path d="M3.5 2.2 Q6.5 1.2 8.3 4.6 L11.3 7.6 Q9 9.8 4.6 11.2 Q4 9 2.8 7.2 Q1.7 4.2 3.5 2.2 Z" fill="none" stroke="#e6eff7" stroke-width="0.9" stroke-linejoin="round"/><path d="M3.8 11.4 Q4.8 12.5 6.3 11.2" fill="none" stroke="#e6eff7" stroke-width="1.1"/></svg>
<svg class="a" style="left:833px;top:6px" width="11" height="10" viewBox="0 0 11 10"><path d="M5.5 1 V9 M1.5 5 H9.5" stroke="#e6eff7" stroke-width="1.3"/></svg>
<svg class="a" style="left:855px;top:5px" width="11" height="11" viewBox="0 0 11 11"><path d="M1 10 Q2 5 6.5 4.5 V2 L10 5.5 L6.5 9 V6.5 Q3 6.5 1 10 Z" fill="none" stroke="#e6eff7" stroke-width="0.9"/></svg>
<svg class="a" style="left:877px;top:5px" width="11" height="11" viewBox="0 0 11 11"><path d="M2.5 5.5 L9 1.2 M2.5 5.5 L9 9.8 M9 1.2 V9.8" stroke="#e6eff7" stroke-width="0.9"/><circle cx="2.6" cy="5.5" r="2" fill="#e6eff7"/><circle cx="9" cy="1.3" r="1.2" fill="#e6eff7"/><circle cx="9" cy="9.7" r="1.2" fill="#e6eff7"/></svg>
<svg class="a" style="left:899px;top:5px" width="12" height="11" viewBox="0 0 12 11"><path d="M1 1 L5 5 L3.5 10 M5 5 L10.5 1 M5.5 7 L9 4.5 L7 10 M2 4 L4 2" fill="none" stroke="#e6eff7" stroke-width="0.9"/></svg>
<svg class="a" style="left:921px;top:5px" width="12" height="12" viewBox="0 0 12 12"><circle cx="6" cy="6" r="5" fill="none" stroke="#e6eff7" stroke-width="0.9"/><path d="M4.3 4.5 Q4.3 2.8 6 2.8 Q7.8 2.8 7.8 4.5 Q7.8 5.5 6.3 6.2 V7.3" fill="none" stroke="#e6eff7" stroke-width="0.9"/><circle cx="6.2" cy="9" r="0.7" fill="#e6eff7"/></svg>
<div class="a" style="left:939px;top:4.5px;width:0.8px;height:12px;background:#9fbad3"></div>
<svg class="a" style="left:943px;top:5px" width="12" height="12" viewBox="0 0 12 12"><path d="M1.2 2.8 L2.8 1.2 L4.8 4.8 Z M10.8 2.8 L9.2 1.2 L7.2 4.8 Z M1.2 9.2 L2.8 10.8 L4.8 7.2 Z M10.8 9.2 L9.2 10.8 L7.2 7.2 Z" fill="#e6eff7" stroke="#e6eff7" stroke-width="0.8" stroke-linejoin="round"/></svg>
<svg class="a" style="left:6px;top:37.5px" width="11" height="10" viewBox="0 0 11 10"><path d="M1 3.5 Q5.5 -0.5 10 3.5" fill="none" stroke="#8fb4d4" stroke-width="1"/><rect x="2" y="4" width="7" height="5" fill="#9bbcd9"/></svg>
<svg class="a" style="left:60px;top:38px" width="10" height="10" viewBox="0 0 10 10"><rect x="0.4" y="0.4" width="8" height="8.4" fill="#e6ecf0" stroke="#b5b5b5" stroke-width="0.8"/><rect x="0.4" y="0.4" width="8" height="2" fill="#adadad"/><path d="M1.5 3.8 L2.5 5 M3.5 3.8 L3.5 5" stroke="#b9c9d6" stroke-width="0.7"/><path d="M1 8.2 H5.5" stroke="#a8a8a8" stroke-width="0.9"/><rect x="6.3" y="2.5" width="1.8" height="3" fill="#fff"/><circle cx="7.5" cy="7.4" r="1.8" fill="#c8c8c8"/><circle cx="7.5" cy="7.4" r="0.7" fill="#eee"/></svg>
<svg class="a" style="left:116px;top:71.5px" width="16" height="10" viewBox="0 0 16 10"><ellipse cx="2.6" cy="2" rx="1.4" ry="1.7" fill="none" stroke="#a5a5a5" stroke-width="0.8"/><path d="M1.2 5.6 Q1.6 4.3 2.7 4.4 Q3.9 4.6 3.6 5.8 L1.2 8.3 H4" fill="none" stroke="#a5a5a5" stroke-width="0.8"/><path d="M6.8 0.6 V8.4 M5.3 6.6 L6.8 8.6 L8.3 6.6" fill="none" stroke="#a5a5a5" stroke-width="0.9"/><path d="M11.2 2.2 L15 2.2 L13.1 4.8 Z" fill="#a5a5a5"/></svg>
<div class="a" style="left:757.5px;top:53px;width:0.6px;height:12px;background:#f2f2f2"></div>
<div class="a" style="left:784.4px;top:53px;width:0.6px;height:12px;background:#f2f2f2"></div>
<div class="a" style="left:816.3px;top:53px;width:0.6px;height:12px;background:#f2f2f2"></div>
<div class="a" style="left:835.5px;top:53px;width:0.6px;height:12px;background:#f2f2f2"></div>
<div class="a" style="left:853.6px;top:53px;width:0.6px;height:12px;background:#f2f2f2"></div>
<div class="a" style="left:872.4px;top:53px;width:0.6px;height:12px;background:#f2f2f2"></div>
<svg class="a" style="left:743.5px;top:55px" width="11" height="10" viewBox="0 0 11 10"><path d="M4 2 V1 H7 L9.3 3.2 V8.8 H4 V7.5" fill="none" stroke="#bdbdbd" stroke-width="0.9"/><path d="M6.5 1.2 V3.4 H9" fill="none" stroke="#bdbdbd" stroke-width="0.7"/><path d="M0.5 5.3 H6.3 M4.6 3.6 L6.4 5.3 L4.6 7" fill="none" stroke="#bdbdbd" stroke-width="0.9"/></svg>
<svg class="a" style="left:762.3px;top:54.5px" width="10" height="10" viewBox="0 0 10 10"><path d="M0.5 1.8 Q2.5 1.2 4 2.8 L6.3 5.2 L5 8.8 L3.5 6.8 Q3.8 4.5 1.8 3.6 Z" fill="#b8b8b8"/><path d="M7.8 0.5 V5.5" stroke="#d0d0d0" stroke-width="0.9"/></svg>
<svg class="a" style="left:773.5px;top:59.8px" width="5" height="4" viewBox="0 0 5 4"><path d="M0.2 0.3 H4.6 L2.4 3.2 Z" fill="#b3b3b3"/></svg>
<svg class="a" style="left:788.5px;top:54.5px" width="10" height="11" viewBox="0 0 10 11"><path d="M4.8 0.3 V10.7" stroke="#bdbdbd" stroke-width="0.7"/><path d="M4.3 2.5 Q1 2.5 1 5.5 Q1 8.5 4.3 8.5" fill="none" stroke="#bdbdbd" stroke-width="0.9"/><path d="M5.3 2.5 Q8.8 2.5 8.8 5.5 Q8.8 8.5 5.3 8.5 Z" fill="#cfcfcf"/><path d="M0.3 5.5 H2.5 M7 5.5 H9.6" stroke="#bdbdbd" stroke-width="0.7"/></svg>
<svg class="a" style="left:803px;top:55.3px" width="10" height="9" viewBox="0 0 10 9"><path d="M3 2.5 V0.7 H8.6 V7.3 H3 V6" fill="none" stroke="#bdbdbd" stroke-width="0.9"/><path d="M0.2 4.2 H5.6 M3.9 2.5 L5.7 4.2 L3.9 5.9" fill="none" stroke="#b0b0b0" stroke-width="0.9"/></svg>
<svg class="a" style="left:821.5px;top:54.8px" width="10" height="10" viewBox="0 0 10 10"><path d="M1.2 4 Q2 0.8 5 0.8 Q7 0.8 8 2.2 M8.6 5.8 Q8 9 5 9 Q3 9 2 7.8" fill="none" stroke="#bdbdbd" stroke-width="0.8"/><path d="M6.8 2.6 L8.8 2.8 L8.6 0.8 Z M3.2 7.2 L1.2 7 L1.4 9.2 Z" fill="#bdbdbd"/><path d="M1 4.9 H9" stroke="#bdbdbd" stroke-width="0.8" stroke-dasharray="1.2 0.8"/></svg>
<svg class="a" style="left:840.8px;top:56.3px" width="8" height="7.5" viewBox="0 0 8 7.5"><path d="M0.3 7 Q0.8 3 4.3 2.6 V0.3 L7.6 3.4 L4.3 6.5 V4.3 Q1.8 4.3 0.3 7 Z" fill="#b8b8b8"/></svg>
<svg class="a" style="left:859px;top:55.2px" width="9" height="9" viewBox="0 0 9 9"><circle cx="4" cy="4.6" r="3.9" fill="#b3b3b3"/><path d="M3 1 Q1.5 4.5 3.2 8.3" stroke="#e8e8e8" stroke-width="0.8" fill="none"/><path d="M4.5 1 Q6.5 3 5.4 5.2" stroke="#d8d8d8" stroke-width="0.6" fill="none"/><path d="M6.3 0.8 L8.3 1.6 L7.3 3" stroke="#c4c4c4" stroke-width="0.6" fill="none"/></svg>
<svg class="a" style="left:877.8px;top:54.6px" width="8" height="9.5" viewBox="0 0 8 9.5"><path d="M0.6 3.6 L3.8 0.6 L7 3.6 Z" fill="none" stroke="#bdbdbd" stroke-width="0.9" stroke-linejoin="round"/><path d="M1.8 3.6 V8.8 H5.8 V3.6" fill="none" stroke="#bdbdbd" stroke-width="0.9"/><path d="M3.8 4 V8" stroke="#bdbdbd" stroke-width="0.8"/></svg>
<svg class="a" style="left:893.8px;top:55.2px" width="10" height="9" viewBox="0 0 10 9"><rect x="0.4" y="0.4" width="6" height="8" rx="1" fill="#bdbdbd"/><path d="M0.4 3 H6.4 M0.4 5.6 H6.4" stroke="#f0f0f0" stroke-width="0.6"/><path d="M5.6 4.5 L9.2 6.6 L5.6 8.6 Z" fill="#fff" stroke="#bdbdbd" stroke-width="0.8"/></svg>
<svg class="a" style="left:907.6px;top:55.5px" width="9" height="9" viewBox="0 0 9 9"><path d="M0.3 0.3 L5.8 3 L3.4 3.8 L2.4 6 Z" fill="#b5b5b5"/><path d="M2.8 3 L5 5.2" stroke="#b5b5b5" stroke-width="0.8"/><rect x="4.4" y="4.8" width="3.8" height="3.6" fill="#fff" stroke="#bdbdbd" stroke-width="0.8"/></svg>
<svg class="a" style="left:918.8px;top:59.8px" width="5" height="4" viewBox="0 0 5 4"><path d="M0.2 0.3 H4.6 L2.4 3.2 Z" fill="#b3b3b3"/></svg>
<svg class="a" style="left:929.2px;top:55.5px" width="8" height="8.5" viewBox="0 0 8 8.5"><path d="M1 1.6 Q3 0 5 1.6 L6.6 4.6 Q7.6 6.3 6.4 7 L2.3 7.8 Q0.6 6.2 0.6 4.3 Z" fill="#bbbbbb"/><path d="M2 8 Q3 8.6 4 7.7" stroke="#c8c8c8" stroke-width="0.6" fill="none"/></svg>
<svg class="a" style="left:938.8px;top:57.6px" width="5" height="4" viewBox="0 0 5 4"><path d="M0.2 0.3 H4.6 L2.4 3.2 Z" fill="#b3b3b3"/></svg>
<svg class="a" style="left:948.8px;top:55px" width="8.5" height="8.7" viewBox="0 0 8.5 8.7"><circle cx="4.1" cy="4.35" r="4" fill="#b8b8b8"/><rect x="3.45" y="3.5" width="1.3" height="3.6" fill="#fff"/><circle cx="4.1" cy="2.2" r="0.75" fill="#fff"/></svg>
<svg class="a" style="left:950.5px;top:522.5px" width="7.5" height="7.5" viewBox="0 0 7.5 7.5"><circle cx="3.5" cy="3.5" r="3.4" fill="#9a9a9a"/><rect x="2.9" y="2.8" width="1.2" height="3" fill="#fff"/><circle cx="3.5" cy="1.6" r="0.65" fill="#fff"/></svg>
<svg class="a" style="left:580.5px;top:468.5px" width="8" height="11" viewBox="0 0 8 11"><path d="M1 1 L1 9 L3 7.3 L4.5 10 L5.8 9.4 L4.3 6.8 L6.8 6.5 Z" fill="#fff" stroke="#444" stroke-width="0.7"/></svg>
<svg class="a" style="left:662.5px;top:268px" width="8" height="8" viewBox="0 0 8 8"><path d="M0.8 0.8 L7.2 7.2 M7.2 0.8 L0.8 7.2" stroke="#555" stroke-width="1"/></svg>
<div class="a" style="left:361.5px;top:311px;width:45px;height:19.7px;background:#9a2fa3;border:1px solid #8a2893;border-radius:2px;color:#f3d0f6;font-size:6.2px;line-height:17.3px;text-align:center">Draft</div>
<div class="a" style="left:421.5px;top:311px;width:45px;height:19.7px;background:#2a7dab;border:1px solid #2a77a2;border-radius:2px;color:#e2eef5;font-size:6.2px;line-height:17.3px;text-align:center">In Work</div>
<div class="a" style="left:481.5px;top:311px;width:45px;height:19.7px;background:#2b8a14;border:1px solid #0f2a08;border-radius:2px;color:#e3f3d8;font-size:6.2px;line-height:17.3px;text-align:center">Active</div>
<div class="a" style="left:541.5px;top:311px;width:45.5px;height:19.7px;background:#ffffff;border:1px solid #d9d9d9;border-radius:2px;color:#a3a3a3;font-size:6.2px;line-height:17.3px;text-align:center">Obsolete</div>
<svg class="a" style="left:400px;top:300px" width="200" height="60" viewBox="0 0 200 60"><path d="M7 20.7 H18" stroke="#cfcfcf" stroke-width="1.3"/><path d="M17 18.6 L21.5 20.7 L17 22.8 Z" fill="#c4c4c4"/><path d="M67 20.7 H78" stroke="#cfcfcf" stroke-width="1.3"/><path d="M77 18.6 L81.5 20.7 L77 22.8 Z" fill="#c4c4c4"/><path d="M127 20.7 H138" stroke="#9b9b9b" stroke-width="1.3"/><path d="M137 18.6 L141.5 20.7 L137 22.8 Z" fill="#8d8d8d"/><path d="M103.5 31 V41.5 H44 V34" fill="none" stroke="#8a8a8a" stroke-width="0.9"/><path d="M42 35.5 L44 31.2 L46 35.5 Z" fill="#7a7a7a"/></svg>
<div class="t" style="left:459.2px;top:342.8px;font-size:5.85px;color:#6f94b6">Set to In Work</div>
<svg class="a" style="left:497.5px;top:343px" width="7" height="7" viewBox="0 0 7 7"><path d="M0.5 3 Q1 0.5 4 0.8 L6 1 L5 2.5 L6.5 6.5 L3 6 Q0.5 5.5 0.5 3 Z" fill="#3f86b8"/></svg>
<div class="t" style="left:551px;top:334.8px;font-size:5.95px;color:#6f94b6">Set to Obsolete</div>
<svg class="a" style="left:541.5px;top:335.5px" width="7" height="7" viewBox="0 0 7 7"><path d="M0.3 0.8 L3 3.5 L0.3 6.2 M2.8 0.8 L5.5 3.5 L2.8 6.2" fill="none" stroke="#c2c2c2" stroke-width="1.4"/></svg>
<div class="a" style="left:634px;top:387px;width:36.5px;height:19.7px;border:1px solid #cdcdcd;border-radius:2px;background:#f0f0f0;color:#555;font-size:6.9px;line-height:17.7px;text-align:center">Cancel</div>
</body></html>
